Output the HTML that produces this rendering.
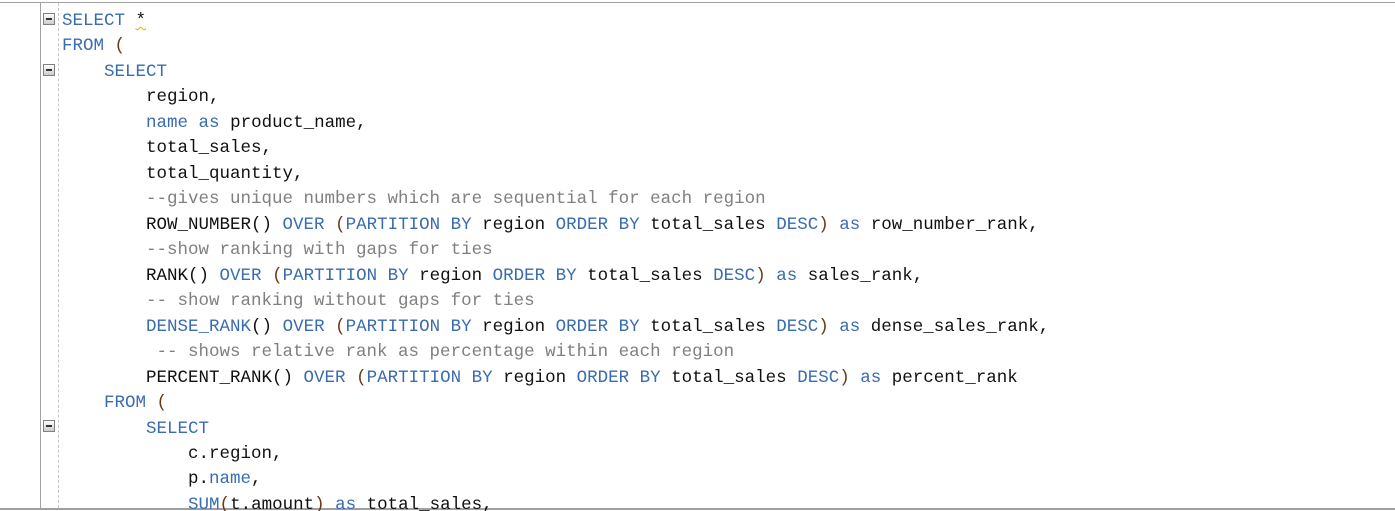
<!DOCTYPE html>
<html><head><style>
html,body{margin:0;padding:0;background:#fff;width:1395px;height:511px;overflow:hidden;position:relative}
.tb{position:absolute;left:0;top:2px;width:1395px;height:1px;background:#a0a0a0}
.bb{position:absolute;left:0;top:508px;width:1395px;height:2px;background:#a0a0a0}
.lb{position:absolute;left:40px;top:2px;width:1px;height:507px;background:#a0a0a0}
.dl{position:absolute;left:58px;top:3px;width:0;height:505px;border-left:1px dashed #c8c8c8}
.fb{position:absolute;left:43px;width:10px;height:10px;border:1px solid #808080;background:linear-gradient(#fff,#ccc);box-sizing:content-box}
.fb:after{content:"";position:absolute;left:2px;top:4px;width:6px;height:2px;background:#333}
pre{position:absolute;left:62px;top:9px;margin:0;font-family:"Liberation Mono",monospace;font-size:17.5px;line-height:25.47px;color:#111}
.k{color:#3a6cb0}.c{color:#808080}.p{color:#6b3a10}
.sq{text-decoration:underline wavy #e0b000;text-decoration-thickness:1px}
</style></head><body>
<div class="tb"></div><div class="bb"></div><div class="lb"></div><div class="dl"></div>
<div class="fb" style="top:13px"></div>
<div class="fb" style="top:64px"></div>
<div class="fb" style="top:420px"></div>
<pre><span class="k">SELECT</span> <span class="sq">*</span>
<span class="k">FROM</span> <span class="p">(</span>
    <span class="k">SELECT</span>
        region,
        <span class="k">name</span> <span class="k">as</span> product_name,
        total_sales,
        total_quantity,
        <span class="c">--gives unique numbers which are sequential for each region</span>
        ROW_NUMBER() <span class="k">OVER</span> <span class="p">(</span><span class="k">PARTITION BY</span> region <span class="k">ORDER BY</span> total_sales <span class="k">DESC</span><span class="p">)</span> <span class="k">as</span> row_number_rank,
        <span class="c">--show ranking with gaps for ties</span>
        RANK() <span class="k">OVER</span> <span class="p">(</span><span class="k">PARTITION BY</span> region <span class="k">ORDER BY</span> total_sales <span class="k">DESC</span><span class="p">)</span> <span class="k">as</span> sales_rank,
        <span class="c">-- show ranking without gaps for ties</span>
        <span class="k">DENSE_RANK</span>() <span class="k">OVER</span> <span class="p">(</span><span class="k">PARTITION BY</span> region <span class="k">ORDER BY</span> total_sales <span class="k">DESC</span><span class="p">)</span> <span class="k">as</span> dense_sales_rank,
         <span class="c">-- shows relative rank as percentage within each region</span>
        PERCENT_RANK() <span class="k">OVER</span> <span class="p">(</span><span class="k">PARTITION BY</span> region <span class="k">ORDER BY</span> total_sales <span class="k">DESC</span><span class="p">)</span> <span class="k">as</span> percent_rank
    <span class="k">FROM</span> <span class="p">(</span>
        <span class="k">SELECT</span>
            c.region,
            p.<span class="k">name</span>,
            <span class="k">SUM</span><span class="p">(</span>t.amount<span class="p">)</span> <span class="k">as</span> total_sales,</pre>
</body></html>
